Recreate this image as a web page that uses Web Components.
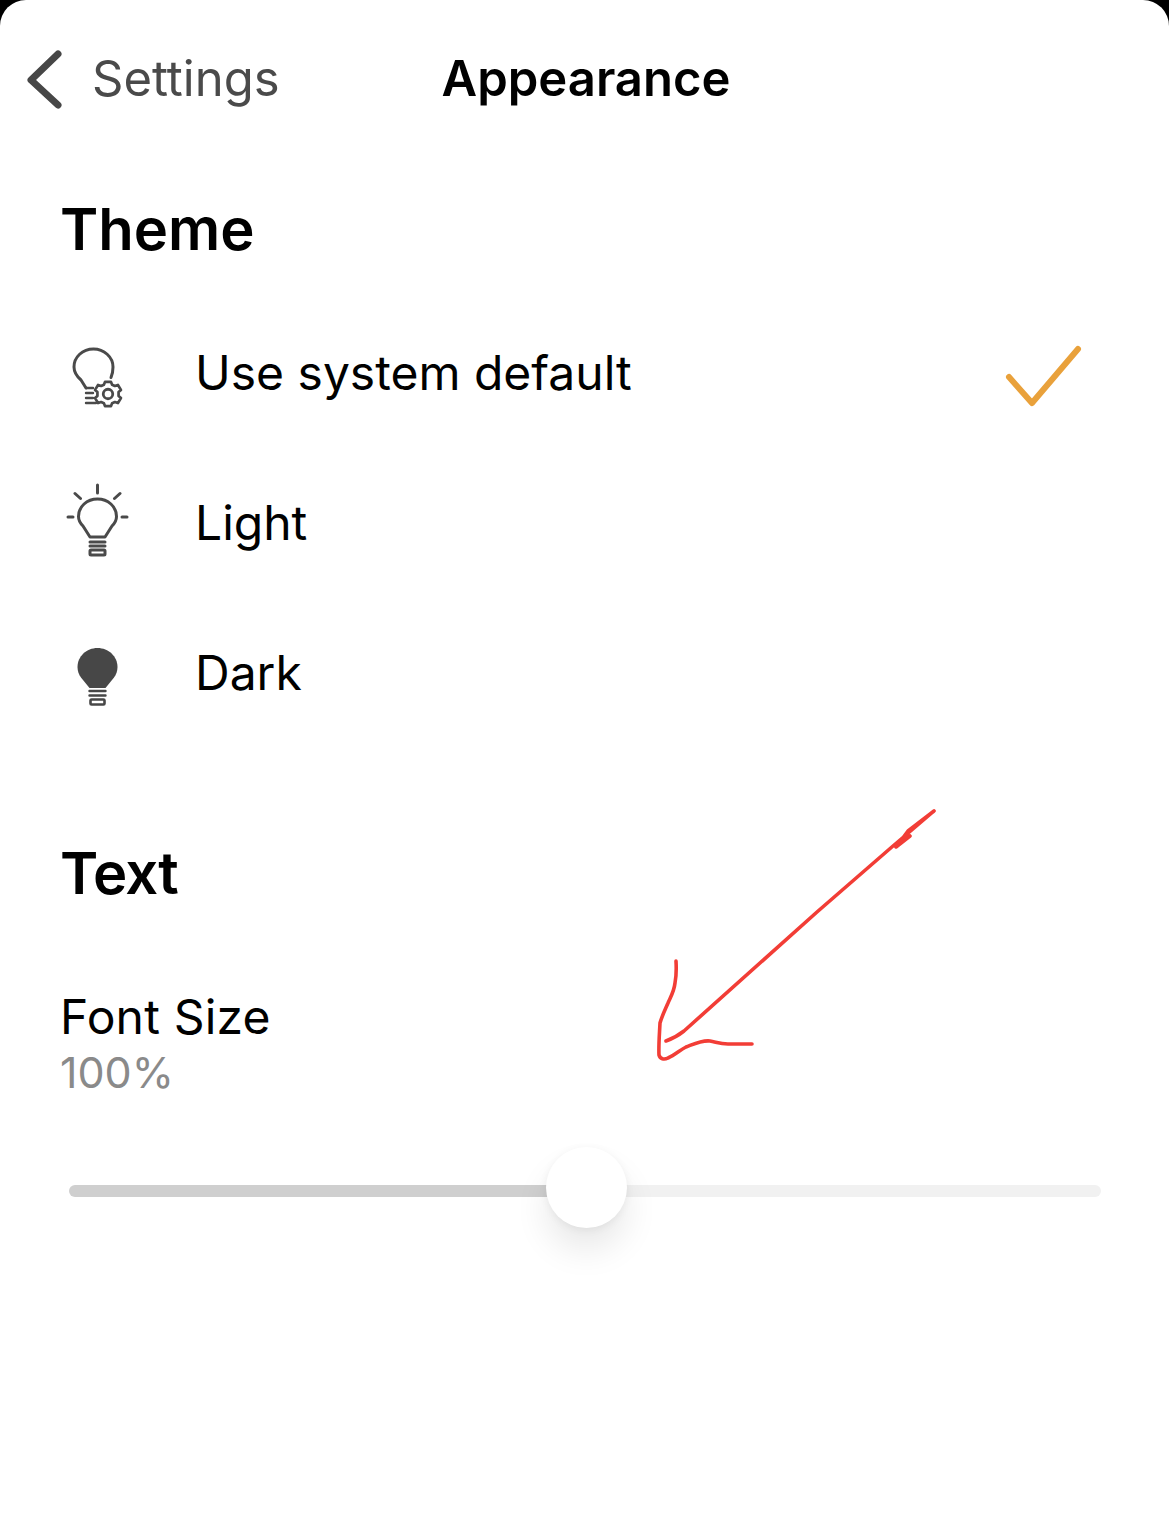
<!DOCTYPE html>
<html>
<head>
<meta charset="utf-8">
<title>Appearance</title>
<style>
  html, body { margin: 0; background: #000; }
  body { font-family: Inter, Roboto, "Liberation Sans", sans-serif; }
</style>
</head>
<body>
<appearance-screen>
  <nav-header back="Settings">Appearance</nav-header>
  <section-title style="--top: 37px">Theme</section-title>
  <theme-list>
    <theme-option icon="system" checked>Use system default</theme-option>
    <theme-option icon="light">Light</theme-option>
    <theme-option icon="dark">Dark</theme-option>
  </theme-list>
  <section-title style="--top: 93px; --spacing: -0.8px">Text</section-title>
  <font-size-control value="100%">Font Size</font-size-control>
  <red-scribble></red-scribble>
</appearance-screen>

<script>
class AppearanceScreen extends HTMLElement {
  constructor() {
    super();
    this.attachShadow({ mode: "open" });
    this.shadowRoot.innerHTML = `
    <style>
      :host {
        display: flex;
        flex-direction: column;
        position: relative;
        box-sizing: border-box;
        height: 1529px;
        overflow: hidden;
        background: #fff;
        border-radius: 26px 26px 0 0;
      }
    </style>
    <slot></slot>`;
  }
}

class NavHeader extends HTMLElement {
  constructor() {
    super();
    this.attachShadow({ mode: "open" });
    this.shadowRoot.innerHTML = `
    <style>
      :host {
        display: grid;
        grid-template-columns: 1fr auto 1fr;
        align-items: center;
        height: 160px;
        color: #000;
      }
      .back {
        display: flex;
        align-items: center;
        gap: 26px;
        padding-left: 27px;
        font-size: 49px;
        color: #4a4a4a;
      }
      .back span, .title { padding-bottom: 3px; }
      svg { width: 39px; height: 60px; display: block; }
      .title { font-size: 49px; font-weight: 600; padding-left: 3px; }
    </style>
    <div class="back">
      <svg viewBox="0 0 39 60" fill="none" stroke="#474747" stroke-width="7" stroke-linecap="round" stroke-linejoin="round">
        <path d="M31 4 L4 30 L31 55"/>
      </svg>
      <span>${this.getAttribute("back")}</span>
    </div>
    <div class="title"><slot></slot></div>
    <div></div>`;
  }
}

class SectionTitle extends HTMLElement {
  constructor() {
    super();
    this.attachShadow({ mode: "open" });
    this.shadowRoot.innerHTML = `
    <style>
      :host {
        display: block;
        margin-top: var(--top, 0);
        padding-left: 60px;
        font-size: 58px;
        line-height: 64px;
        font-weight: 600;
        letter-spacing: var(--spacing, 0);
        color: #000;
      }
    </style>
    <slot></slot>`;
  }
}

class ThemeList extends HTMLElement {
  constructor() {
    super();
    this.attachShadow({ mode: "open" });
    this.shadowRoot.innerHTML = `
    <style>
      :host { display: flex; flex-direction: column; margin-top: 37px; }
    </style>
    <slot></slot>`;
  }
}

const THEME_ICONS = {
  system: `
    <g transform="translate(11 14)" fill="none" stroke="#4a4a4a" stroke-width="3" stroke-linecap="round" stroke-linejoin="round">
      <path d="M18 41 L13 33 C9 29.500 6 25 6 20 C6 10 14.500 2 25.500 2 C36 2 45 10 45 20 C45 24 44.500 27 43 30.500"/>
      <path d="M18 41 H25 M18 46 H25 M18 51 H25 M18 56 H28" stroke-width="2.400"/>
      <g transform="translate(40 47) scale(1.080) translate(-42 -48)">
        <circle cx="42" cy="48" r="4.400" stroke-width="2.600"/>
        <path stroke-width="2.500" d="M39.200 36.800 H44.800 L45.800 39.400 L48.400 40.600 L51.200 39.600 L54 44.200 L51.800 46.200 V49.800 L54 51.800 L51.200 56.400 L48.400 55.400 L45.800 56.600 L44.800 59.200 H39.200 L38.200 56.600 L35.600 55.400 L32.800 56.400 L30 51.800 L32.200 49.800 V46.200 L30 44.200 L32.800 39.600 L35.600 40.600 L38.200 39.400 Z"/>
      </g>
    </g>`,
  light: `
    <g transform="translate(0 2)" fill="none" stroke="#4a4a4a" stroke-width="3" stroke-linecap="round" stroke-linejoin="round">
      <path d="M40.500 0 V8 M18 8.500 L23.500 13.500 M63 8.500 L57.500 13.500 M11 32 H16 M65 32 H70"/>
      <path d="M33 52 L26 41 C22.500 37.500 21.500 34 21.500 31.500 C21.500 21.500 30 14 40.500 14 C51 14 59.500 21.500 59.500 31.500 C59.500 34 58.500 37.500 55 41 L48 52 Z"/>
      <path d="M33 57 H48 M33 61 H48"/>
      <rect x="33" y="65" width="15" height="5" rx="1"/>
    </g>`,
  dark: `
    <g transform="translate(0 2)">
    <path fill="#474747" d="M40.500 13 C51.500 13 60.500 21.500 60.500 32 C60.500 36 59.200 39.500 57 42.500 L48.500 53 H32.500 L24 42.500 C21.800 39.500 20.500 36 20.500 32 C20.500 21.500 29.500 13 40.500 13 Z"/>
    <path d="M32.500 56 H48.500 M32.500 60.500 H48.500" stroke="#474747" stroke-width="2.400" stroke-linecap="round"/>
    <rect x="33.500" y="64.500" width="14" height="5" rx="1" fill="none" stroke="#474747" stroke-width="2.600"/>
    </g>`
};

class ThemeOption extends HTMLElement {
  constructor() {
    super();
    this.attachShadow({ mode: "open" });
    const checked = this.hasAttribute("checked");
    this.shadowRoot.innerHTML = `
    <style>
      :host {
        display: flex;
        align-items: center;
        height: 150px;
        padding-left: 57px;
        padding-right: 86px;
        font-size: 48px;
        color: #000;
      }
      .icon { width: 81px; height: 80px; flex: none; display: block; margin-right: 57px; }
      .label { flex: 1; padding-bottom: 1px; }
      .check { width: 78px; height: 64px; display: block; transform: translateY(3px); }
    </style>
    <svg class="icon" viewBox="0 0 81 80">${THEME_ICONS[this.getAttribute("icon")]}</svg>
    <span class="label"><slot></slot></span>
    ${checked ? `<svg class="check" viewBox="0 0 78 64" fill="none" stroke="#e9a13b" stroke-width="6" stroke-linecap="round" stroke-linejoin="round"><path d="M4 33 L27 59 L73 5"/></svg>` : ""}`;
  }
}

class FontSizeControl extends HTMLElement {
  constructor() {
    super();
    this.attachShadow({ mode: "open" });
    this.shadowRoot.innerHTML = `
    <style>
      :host { display: block; margin-top: 82px; padding: 0 68px 0 60px; }
      .name { font-size: 48px; line-height: 60px; letter-spacing: .2px; color: #000; }
      .value { font-size: 43px; line-height: 50px; color: #8a8a8a; }
      .track {
        display: flex;
        position: relative;
        height: 12px;
        margin: 88px 0 0 9px;
        border-radius: 6px;
        overflow: visible;
      }
      .filled { width: 478px; background: #cfcfcf; border-radius: 6px 0 0 6px; }
      .rest { flex: 1; background: #f1f1f1; border-radius: 0 6px 6px 0; }
      .thumb {
        position: absolute;
        left: 477px;
        top: -38px;
        width: 81px;
        height: 81px;
        border-radius: 50%;
        background: #fff;
        box-shadow: 0 2px 8px rgba(0,0,0,.06), 0 22px 34px rgba(0,0,0,.09);
      }
    </style>
    <div class="name"><slot></slot></div>
    <div class="value">${this.getAttribute("value")}</div>
    <div class="track">
      <div class="filled"></div>
      <div class="rest"></div>
      <div class="thumb"></div>
    </div>`;
  }
}

// hand drawn annotation lying over the page
class RedScribble extends HTMLElement {
  constructor() {
    super();
    this.attachShadow({ mode: "open" });
    this.shadowRoot.innerHTML = `
    <style>
      :host { display: block; position: absolute; left: 640px; top: 800px; width: 310px; height: 270px; pointer-events: none; }
      svg { display: block; }
    </style>
    <svg width="310" height="270" viewBox="640 800 310 270" fill="none" stroke="#f23d36" stroke-width="3.600" stroke-linecap="round" stroke-linejoin="round">
      <path d="M666 1041 C674 1038 679 1035 684 1031 L817 912 L893 846 L934 811 L908 831 L896 847 L910 836"/>
      <path d="M676 961 C676.500 970 676 978 675 983 C674 992 670 998 668 1003 C665 1010 662 1016 660 1023 C659.500 1034 658.500 1045 659 1055 C660 1059 664 1060 668 1058 C675 1055 680 1050 686 1047 C694 1044 702 1040 710 1041 C716 1042 720 1044 728 1044 L752 1044"/>
    </svg>`;
  }
}

customElements.define("appearance-screen", AppearanceScreen);
customElements.define("nav-header", NavHeader);
customElements.define("section-title", SectionTitle);
customElements.define("theme-list", ThemeList);
customElements.define("theme-option", ThemeOption);
customElements.define("font-size-control", FontSizeControl);
customElements.define("red-scribble", RedScribble);
</script>
</body>
</html>
